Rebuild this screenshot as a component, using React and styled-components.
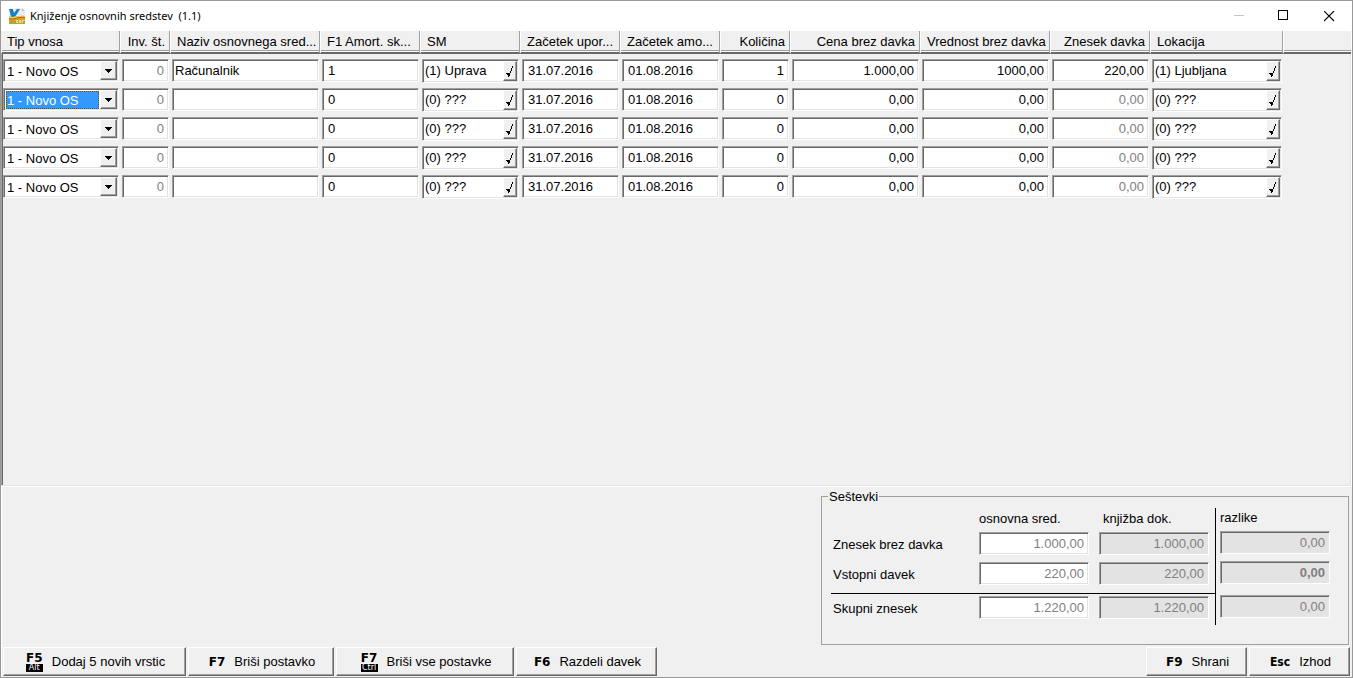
import React from "react";
import styled, { createGlobalStyle, css } from "styled-components";

const GlobalStyle = createGlobalStyle`
  *, *::before, *::after { box-sizing: border-box; }
  body {
    margin: 0;
    background: #f0f0f0;
    color: #000;
    font: 13px/15px "Liberation Sans", Arial, sans-serif;
  }
  button, input, select {
    font: inherit;
    color: inherit;
    margin: 0;
    border-radius: 0;
  }
`;

const sunken = css`
  border: 1px solid;
  border-color: #a0a0a0 #fff #fff #a0a0a0;
  box-shadow: inset 1px 1px #696969, inset -1px -1px #e3e3e3;
`;

const raised = css`
  background: #f0f0f0;
  border: 1px solid;
  border-color: #fff #696969 #696969 #fff;
  box-shadow: inset -1px -1px #a0a0a0;
`;

const Window = styled.div`
  display: flex;
  flex-direction: column;
  min-height: 100vh;
  border: 1px solid #999;
`;

const TitleBar = styled.header`
  display: flex;
  align-items: center;
  height: 30px;
  padding-left: 8px;
  background: #fff;
`;

const Title = styled.h1`
  flex: 1;
  margin: 0 0 0 4px;
  font: 11px/16px "Noto Sans", "Open Sans", sans-serif;
  white-space: pre;
`;

const CaptionButton = styled.button`
  display: flex;
  align-items: center;
  justify-content: center;
  width: 45px;
  height: 28px;
  padding: 0;
  border: 0;
  background: transparent;
  color: ${(p) => (p.disabled ? "#c4c4c4" : "#000")};
`;

const GridPanel = styled.main`
  flex: 1;
  padding-left: 1px;
  background:
    linear-gradient(#a0a0a0, #a0a0a0) 0 22px / 1px 100% no-repeat,
    linear-gradient(#696969, #696969) 1px 22px / 1px 100% no-repeat,
    #f0f0f0;
  border-right: 1px solid #fff;
  border-bottom: 1px solid #fff;
  box-shadow: inset -1px -1px #e3e3e3;
  overflow: hidden;
`;

const Table = styled.table`
  width: 100%;
  table-layout: fixed;
  border-collapse: separate;
  border-spacing: 0;
`;

const HeadCell = styled.th`
  height: 23px;
  padding: 0 4px 0 6px;
  overflow: hidden;
  background: #f0f0f0;
  border-left: 1px solid #fff;
  border-right: 1px solid #a0a0a0;
  border-bottom: 2px solid #696969;
  box-shadow: inset 0 -1px #fff, inset 0 -2px #a0a0a0;
  font-weight: normal;
  text-align: ${(p) => p.$align || "left"};
  white-space: nowrap;

  &:first-child { border-left: 0; padding-left: 5px; }
  &:last-child { border-right: 0; }
`;

const Cell = styled.td`
  height: 29px;
  padding: 5px 1px 0 2px;
  vertical-align: top;

  &:first-child { padding-left: 1px; }
`;

const Field = styled.input`
  ${sunken}
  display: block;
  width: 100%;
  height: 23px;
  padding: 0 4px 0 ${(p) => (p.$inset ? 5 : 2)}px;
  background: ${(p) => (p.$shade ? "#e3e3e3" : "#fff")};
  color: ${(p) => (p.$muted ? "#808080" : "#000")};
  font-weight: ${(p) => (p.$bold ? "bold" : "normal")};
  text-align: ${(p) => p.$align || "left"};
  outline: 0;
`;

const Combo = styled.div`
  ${sunken}
  display: flex;
  height: 23px;
  padding: 1px;
  background: #fff;
`;

const ComboSelect = styled.select`
  appearance: none;
  flex: 1;
  min-width: 0;
  height: 18px;
  margin: 1px 1px 0;
  padding: 0;
  border: ${(p) => (p.$active ? "1px dotted #7a4a10" : "1px solid #fff")};
  background: ${(p) => (p.$active ? "#3399ff" : "#fff")};
  color: ${(p) => (p.$active ? "#fff" : "#000")};
  outline: 0;
`;

const DropArrow = styled.span`
  ${raised}
  display: flex;
  align-items: center;
  justify-content: center;
  width: 17px;
  height: 19px;
  pointer-events: none;
`;

const Lookup = styled.div`
  ${sunken}
  display: flex;
  height: 24px;
  padding: 1px;
  background: #fff;
`;

const LookupInput = styled.input`
  flex: 1;
  min-width: 0;
  height: 19px;
  padding: 0 0 0 1px;
  border: 0;
  background: transparent;
  outline: 0;
`;

const LookupButton = styled.button`
  ${raised}
  display: flex;
  align-items: center;
  justify-content: center;
  width: 14px;
  height: 20px;
  padding: 1px 0 0;
`;

const Footer = styled.footer`
  display: flex;
  flex-direction: column;
  gap: 2px;
  padding: 2px 2px 1px 1px;
  border-left: 1px solid #fff;
`;

const Totals = styled.fieldset`
  display: flex;
  align-self: flex-end;
  width: 528px;
  height: 156px;
  margin: 0 1px 0 0;
  padding: 4px 18px 0 9px;
  border: 1px solid #a0a0a0;
`;

const Legend = styled.legend`
  margin-left: -3px;
  padding: 0 1px;
  line-height: 15px;
`;

const TotalsMain = styled.div`
  flex: 1;
`;

const TotalsDiff = styled.div`
  width: 115px;
  height: 117px;
  padding-left: 4px;
  border-left: 1px solid #000;
`;

const TotalsHead = styled.div`
  display: grid;
  grid-template-columns: ${(p) => (p.$single ? "110px" : "138px 110px 110px")};
  column-gap: 10px;
  height: ${(p) => (p.$single ? 23 : 24)}px;
  padding-top: ${(p) => (p.$single ? 2 : 3)}px;

  span:nth-child(3) { padding-left: 4px; }
`;

const TotalsRow = styled.div`
  display: grid;
  grid-template-columns: ${(p) => (p.$single ? "110px" : "138px 110px 110px")};
  column-gap: 10px;
  height: ${(p) => (p.$tall ? 34 : 30)}px;

  label {
    padding: 5px 0 0 2px;
  }
`;

const RuledRow = styled(TotalsRow)`
  height: 32px;
  margin-bottom: 2px;
  border-bottom: 1px solid #000;
`;

const ButtonBar = styled.div`
  display: flex;
  gap: 2px;
`;

const Spacer = styled.div`
  flex: 1;
`;

const ActionButton = styled.button`
  ${raised}
  display: flex;
  align-items: center;
  justify-content: center;
  gap: 9px;
  width: ${(p) => p.$width}px;
  height: 29px;
  padding: 0 0 0 2px;
  white-space: nowrap;
`;

const KeyCap = styled.span`
  display: flex;
  flex-direction: column;
  align-items: center;
  font: bold 12px/12px ${(p) => (p.$narrow ? '"DejaVu Sans Condensed", ' : "")}"DejaVu Sans", sans-serif;
`;

const Modifier = styled.span`
  width: 17px;
  background: #000;
  color: #fff;
  font: 8px/8px "DejaVu Sans", sans-serif;
  text-align: center;
`;

const AppIcon = () => (
  <svg width="17" height="16" viewBox="0 0 17 16" aria-hidden="true">
    <path d="M5 0h8l3 3v6H5z" fill="#e9eef3" />
    <path d="M13 0v3h3z" fill="#b9c4cf" />
    <path d="M0 1h4l1 4 3-4h3L6 9H2z" fill="#1580c4" />
    <path d="M0 8c4 2 8-1 16 0v8H0z" fill="#d8a91c" />
    <path d="M0 8c4 3 8-1 16 0v2c-7-2-11 3-16 0z" fill="#f4d64a" />
    <path d="M0 10c5 2 9-2 16-1v1c-7-1-11 3-16 1z" fill="#d2452c" />
    <path d="M0 12c5 2 9-2 16 0v4H0z" fill="#b3a636" />
    <path d="M9 12.5H7.500v2h1.500v-1M10.500 12.500h1.500v2h-1.500zM13.500 15v-2.500h2" fill="none" stroke="#f5efc8" strokeWidth="0.8" />
  </svg>
);

const MinimizeIcon = () => (
  <svg width="11" height="11" viewBox="0 0 11 11" aria-hidden="true">
    <path d="M0 4.500h10" stroke="currentColor" fill="none" />
  </svg>
);

const MaximizeIcon = () => (
  <svg width="13" height="13" viewBox="0 0 13 13" aria-hidden="true">
    <rect x="0.5" y="0.5" width="9" height="9" stroke="currentColor" fill="none" />
  </svg>
);

const CloseIcon = () => (
  <svg width="11" height="11" viewBox="0 0 11 11" aria-hidden="true">
    <path d="M0 0l10 10M10 0l-10 10" stroke="currentColor" strokeWidth="1.1" fill="none" />
  </svg>
);

const ArrowIcon = () => (
  <svg width="8" height="4" viewBox="0 0 8 4" aria-hidden="true">
    <path d="M0 0h7v1H6v1H5v1H4v1H3V3H2V2H1V1H0z" fill="#000" />
  </svg>
);

const CheckIcon = () => (
  <svg width="8" height="12" viewBox="0 0 8 12" shapeRendering="crispEdges" aria-hidden="true">
    <path
      d="M6 0h1v2h-1zM5 2h1v3h-1zM4 5h1v2h-1zM3 7h1v3h-1zM2 10h1v1h-1zM0 7h3v1h-3zM1 8h2v1h-2zM2 9h1v1h-1z"
      fill="#000"
    />
  </svg>
);

const columns = [
  { label: "Tip vnosa", width: 118 },
  { label: "Inv. št.", width: 50, align: "right" },
  { label: "Naziv osnovnega sred...", width: 150 },
  { label: "F1 Amort. sk...", width: 100 },
  { label: "SM", width: 100 },
  { label: "Začetek upor...", width: 100 },
  { label: "Začetek amo...", width: 100 },
  { label: "Količina", width: 70, align: "right" },
  { label: "Cena brez davka", width: 130, align: "right" },
  { label: "Vrednost brez davka", width: 130, align: "right" },
  { label: "Znesek davka", width: 100, align: "right" },
  { label: "Lokacija", width: 133 },
];

const emptyRow = {
  name: "", group: "0", sm: "(0) ???", qty: "0",
  price: "0,00", value: "0,00", tax: "0,00", taxMuted: true, place: "(0) ???",
};

const rows = [
  {
    name: "Računalnik", group: "1", sm: "(1) Uprava", qty: "1",
    price: "1.000,00", value: "1000,00", tax: "220,00", place: "(1) Ljubljana",
  },
  { ...emptyRow, active: true },
  emptyRow,
  emptyRow,
  emptyRow,
];

function LookupField({ label, value }) {
  return (
    <Lookup>
      <LookupInput aria-label={label} defaultValue={value} />
      <LookupButton type="button" aria-label={`${label} – izbor`}>
        <CheckIcon />
      </LookupButton>
    </Lookup>
  );
}

function AssetRow({ row }) {
  return (
    <tr>
      <Cell>
        <Combo>
          <ComboSelect aria-label="Tip vnosa" $active={row.active}>
            <option>1 - Novo OS</option>
          </ComboSelect>
          <DropArrow><ArrowIcon /></DropArrow>
        </Combo>
      </Cell>
      <Cell><Field aria-label="Inv. št." defaultValue="0" readOnly $muted $align="right" /></Cell>
      <Cell><Field aria-label="Naziv osnovnega sredstva" defaultValue={row.name} /></Cell>
      <Cell><Field aria-label="Amort. skupina" defaultValue={row.group} $inset /></Cell>
      <Cell><LookupField label="SM" value={row.sm} /></Cell>
      <Cell><Field aria-label="Začetek uporabe" defaultValue="31.07.2016" $inset /></Cell>
      <Cell><Field aria-label="Začetek amortizacije" defaultValue="01.08.2016" $inset /></Cell>
      <Cell><Field aria-label="Količina" defaultValue={row.qty} $align="right" /></Cell>
      <Cell><Field aria-label="Cena brez davka" defaultValue={row.price} $align="right" /></Cell>
      <Cell><Field aria-label="Vrednost brez davka" defaultValue={row.value} $align="right" /></Cell>
      <Cell><Field aria-label="Znesek davka" defaultValue={row.tax} $align="right" $muted={row.taxMuted} /></Cell>
      <Cell><LookupField label="Lokacija" value={row.place} /></Cell>
      <Cell />
    </tr>
  );
}

function TotalsLine({ row: Row = TotalsRow, id, label, value }) {
  return (
    <Row>
      <label htmlFor={id}>{label}</label>
      <Field id={id} defaultValue={value} readOnly $muted $align="right" />
      <Field aria-label={`${label}, knjižba dok.`} defaultValue={value} readOnly $muted $shade $align="right" />
    </Row>
  );
}

export default function App() {
  return (
    <Window>
      <GlobalStyle />
      <TitleBar>
        <AppIcon />
        <Title>Knjiženje osnovnih sredstev  (1.1)</Title>
        <CaptionButton type="button" aria-label="Minimiraj" disabled><MinimizeIcon /></CaptionButton>
        <CaptionButton type="button" aria-label="Maksimiraj"><MaximizeIcon /></CaptionButton>
        <CaptionButton type="button" aria-label="Zapri"><CloseIcon /></CaptionButton>
      </TitleBar>

      <GridPanel>
        <Table>
          <colgroup>
            {columns.map((c) => <col key={c.label} width={c.width} />)}
            <col />
          </colgroup>
          <thead>
            <tr>
              {columns.map((c) => (
                <HeadCell key={c.label} scope="col" $align={c.align}>{c.label}</HeadCell>
              ))}
              <HeadCell as="td" />
            </tr>
          </thead>
          <tbody>
            {rows.map((row, i) => <AssetRow key={i} row={row} />)}
          </tbody>
        </Table>
      </GridPanel>

      <Footer>
        <Totals>
          <Legend>Seštevki</Legend>
          <TotalsMain>
            <TotalsHead>
              <span />
              <span>osnovna sred.</span>
              <span>knjižba dok.</span>
            </TotalsHead>
            <TotalsLine id="net" label="Znesek brez davka" value="1.000,00" />
            <TotalsLine row={RuledRow} id="tax" label="Vstopni davek" value="220,00" />
            <TotalsLine id="total" label="Skupni znesek" value="1.220,00" />
          </TotalsMain>
          <TotalsDiff>
            <TotalsHead $single><span>razlike</span></TotalsHead>
            <TotalsRow $single>
              <Field aria-label="Znesek brez davka, razlike" defaultValue="0,00" readOnly $muted $shade $align="right" />
            </TotalsRow>
            <TotalsRow $single $tall>
              <Field aria-label="Vstopni davek, razlike" defaultValue="0,00" readOnly $muted $shade $bold $align="right" />
            </TotalsRow>
            <TotalsRow $single>
              <Field aria-label="Skupni znesek, razlike" defaultValue="0,00" readOnly $muted $shade $align="right" />
            </TotalsRow>
          </TotalsDiff>
        </Totals>

        <ButtonBar>
          <ActionButton type="button" $width={183}>
            <KeyCap>F5<Modifier>Alt</Modifier></KeyCap>Dodaj 5 novih vrstic
          </ActionButton>
          <ActionButton type="button" $width={146}>
            <KeyCap>F7</KeyCap>Briši postavko
          </ActionButton>
          <ActionButton type="button" $width={178}>
            <KeyCap>F7<Modifier>Ctrl</Modifier></KeyCap>Briši vse postavke
          </ActionButton>
          <ActionButton type="button" $width={141}>
            <KeyCap>F6</KeyCap>Razdeli davek
          </ActionButton>
          <Spacer />
          <ActionButton type="button" $width={101}>
            <KeyCap>F9</KeyCap>Shrani
          </ActionButton>
          <ActionButton type="button" $width={101}>
            <KeyCap $narrow>Esc</KeyCap>Izhod
          </ActionButton>
        </ButtonBar>
      </Footer>
    </Window>
  );
}
